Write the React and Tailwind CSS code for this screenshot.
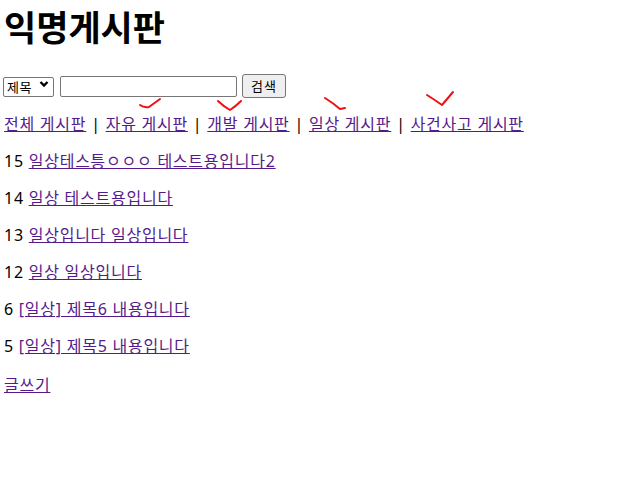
import React from 'react';

const boards = ['전체 게시판', '자유 게시판', '개발 게시판', '일상 게시판', '사건사고 게시판'];

const posts = [
  { id: 15, title: '일상테스틍ㅇㅇㅇ 테스트용입니다2' },
  { id: 14, title: '일상 테스트용입니다' },
  { id: 13, title: '일상입니다 일상입니다' },
  { id: 12, title: '일상 일상입니다' },
  { id: 6, title: '[일상] 제목6 내용입니다' },
  { id: 5, title: '[일상] 제목5 내용입니다' },
];

function Marks() {
  // red pen check marks drawn over the screenshot
  return (
    <svg className="absolute left-0 top-0 pointer-events-none" width="633" height="497" fill="none" stroke="#f01010" strokeWidth="2" strokeLinecap="round" strokeLinejoin="round">
      <path d="M140 105 Q144 108 149 107 L160 99" />
      <path d="M218 101 Q223 106 230 110 Q236 106 241 101" />
      <path d="M325 98 Q333 103 340 109 L345 108" />
      <path d="M427 95 Q435 100 442 105 Q448 98 453 92" />
    </svg>
  );
}

export default function App() {
  return (
    <div className="relative w-[633px] h-[497px] bg-white text-black font-['Noto_Sans','Noto_Sans_CJK_KR',sans-serif] text-[16px] px-[3px]">
      <h1 className="text-[35px] font-bold leading-[44px] pt-[6px] pl-px tracking-[0px]">익명게시판</h1>

      <form className="flex items-center mt-[24px] h-[24px]" onSubmit={e => e.preventDefault()}>
        <div className="relative">
          <select className="appearance-none w-[51px] h-[20px] border border-[#767676] rounded-[2px] bg-white pl-[3px] text-[13px] leading-[18px] tracking-[0.5px]">
            <option>제목</option>
            <option>내용</option>
          </select>
          <svg className="absolute right-[5px] top-[6px] pointer-events-none" width="10" height="8" viewBox="0 0 10 8" fill="none" stroke="#000" strokeWidth="2.4">
            <path d="M1.5 2 L5 5.5 L8.5 2" />
          </svg>
        </div>
        <input type="text" className="ml-[6px] w-[177px] h-[21px] border border-[#767676] rounded-[2px] bg-white" />
        <button type="submit" className="ml-[5px] w-[44px] h-[24px] border border-[#767676] rounded-[3px] bg-[#efefef] text-[13px] leading-[20px] tracking-[1px]">
          검색
        </button>
      </form>

      <p className="mt-[16px] pl-px leading-[21px] tracking-[0.75px]">
        {boards.map((b, i) => (
          <React.Fragment key={b}>
            {i > 0 && ' | '}
            <a href="#" className="text-[#551a8b] underline">{b}</a>
          </React.Fragment>
        ))}
      </p>

      <div className="mt-[16px] pl-px">
        {posts.map(p => (
          <p key={p.id} className="leading-[21px] mb-[16px] tracking-[0.75px]">
            {p.id} <a href="#" className="text-[#551a8b] underline">{p.title}</a>
          </p>
        ))}
        <a href="#" className="text-[#551a8b] underline leading-[21px] tracking-[0.75px]">글쓰기</a>
      </div>

      <Marks />
    </div>
  );
}
